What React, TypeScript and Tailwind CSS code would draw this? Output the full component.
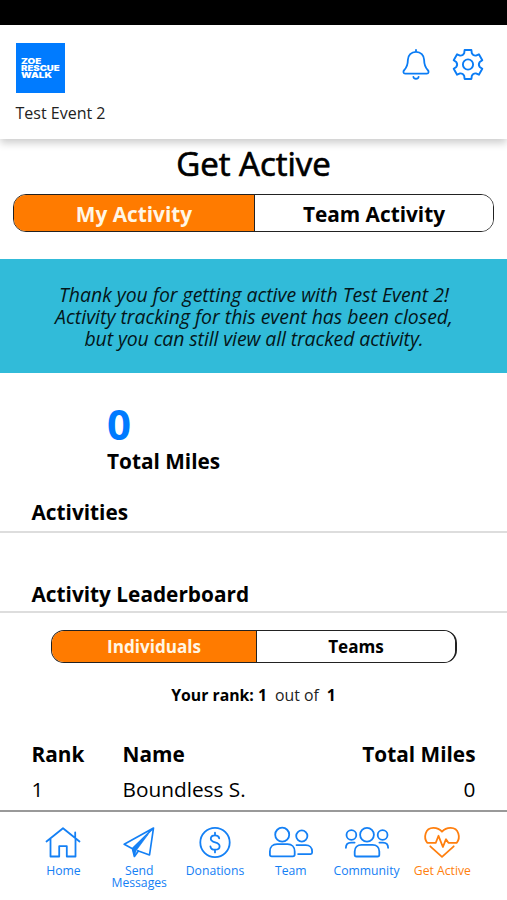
import React, { useState } from 'react';
import clsx from 'clsx';

interface IconProps {
  className?: string;
}

interface NavItem {
  label: string[];
  icon: React.FC<IconProps>;
}

interface LeaderboardRow {
  rank: number;
  name: string;
  miles: number;
}

const BellIcon: React.FC<IconProps> = ({ className }) => (
  <svg className={className} viewBox="0 0 28 33" fill="none" stroke="currentColor" strokeWidth={1.8} strokeLinecap="round" strokeLinejoin="round">
    <path d="M14 1.8v2M14 3.8c-4.8 0-8 3.4-8.1 8-.1 5.2-.6 7.2-3.6 10.2-1.5 1.5-1 3.6.9 3.6h21.6c1.9 0 2.4-2.1.9-3.6-3-3-3.5-5-3.6-10.2-.1-4.6-3.3-8-8.1-8z" />
    <path d="M11.4 28.8c.5 2.6 4.7 2.6 5.2 0" />
  </svg>
);

const GearIcon: React.FC<IconProps> = ({ className }) => (
  <svg className={className} viewBox="-16 -16 32 32" fill="none" stroke="currentColor" strokeWidth={1.9} strokeLinejoin="round">
    <circle r="5.1" />
    <path d="M-3.4-14.5H3.4L3.8-11.3Q5-8.7 7.9-8.9L10.9-10.2 14.3-4.3 11.7-2.4Q10 0 11.7 2.4L14.3 4.3 10.9 10.2 7.9 8.9Q5 8.7 3.8 11.3L3.4 14.5H-3.4L-3.8 11.3Q-5 8.7-7.9 8.9L-10.9 10.2-14.3 4.3-11.7 2.4Q-10 0-11.7-2.4L-14.3-4.3-10.9-10.2-7.9-8.9Q-5-8.7-3.8-11.3Z" />
  </svg>
);

const HomeIcon: React.FC<IconProps> = ({ className }) => (
  <svg className={className} viewBox="0 0 44 34" fill="none" stroke="currentColor" strokeWidth={1.8} strokeLinecap="round" strokeLinejoin="round">
    <path d="M5.500 15.500L22 2.200l16.500 13.300M34.200 11.500V6.500M9.500 13v17.500h8.700V20.200h7.600v10.300h8.700V13" />
  </svg>
);

const SendIcon: React.FC<IconProps> = ({ className }) => (
  <svg className={className} viewBox="0 0 44 34" fill="none" stroke="currentColor" strokeWidth={1.7} strokeLinecap="round" strokeLinejoin="round">
    <path d="M36.500 2L7.200 18.300l8.300 4.400zM36.500 2l-4 27-11.700-4.300M15.500 22.700l1.900 7.800 4-5.600" />
    <path d="M31 8.500L15.500 22.700l2 7.500 1.800-5.600z" fill="currentColor" strokeWidth={0.6} />
  </svg>
);

const DonationIcon: React.FC<IconProps> = ({ className }) => (
  <svg className={className} viewBox="0 0 44 34" fill="none" stroke="currentColor" strokeWidth={1.8} strokeLinecap="round">
    <circle cx="22" cy="16.500" r="14.700" />
    <path d="M26.200 12.400c-.3-2-1.900-3-4.200-3-2.500 0-4.200 1.300-4.200 3.400 0 4.700 8.800 2.500 8.800 7.400 0 2.200-1.800 3.500-4.500 3.500s-4.400-1.200-4.700-3.400M22 6.700v2.700M22 23.700v2.700" />
  </svg>
);

const TeamIcon: React.FC<IconProps> = ({ className }) => (
  <svg className={className} viewBox="0 0 44 34" fill="none" stroke="currentColor" strokeWidth={1.8} strokeLinecap="round" strokeLinejoin="round">
    <circle cx="13.200" cy="8.700" r="7" />
    <path d="M.9 28.500v-3c0-4.500 3-7.300 7.200-7.300h10.400c4.200 0 7.200 2.800 7.200 7.300v3c0 1-.8 1.900-1.900 1.900H2.800c-1.100 0-1.900-.9-1.900-1.900z" />
    <circle cx="32.800" cy="10" r="5.600" />
    <path d="M27.500 19.100h9.200c3.800 0 6.400 2.500 6.400 6.300v1.200c0 .9-.6 1.500-1.500 1.500H29.100" />
  </svg>
);

const CommunityIcon: React.FC<IconProps> = ({ className }) => (
  <svg className={className} viewBox="0 0 44 34" fill="none" stroke="currentColor" strokeWidth={1.8} strokeLinecap="round" strokeLinejoin="round">
    <circle cx="22" cy="8.800" r="6.900" />
    <circle cx="6.400" cy="9" r="4.900" />
    <circle cx="37.600" cy="9" r="4.900" />
    <path d="M9.700 28.700v-3.200c0-4 2.800-6.700 6.800-6.700h11c4 0 6.800 2.700 6.800 6.700v3.200c0 1-.7 1.800-1.800 1.800h-21c-1.100 0-1.800-.8-1.800-1.800z" />
    <path d="M.9 21.800c0-3.400 2.100-5.200 5.200-5.200h3.500M43.100 21.800c0-3.400-2.100-5.200-5.200-5.200h-3.500" />
  </svg>
);

const HeartIcon: React.FC<IconProps> = ({ className }) => (
  <svg className={className} viewBox="0 0 44 34" fill="none" stroke="currentColor" strokeWidth={1.8} strokeLinecap="round" strokeLinejoin="round">
    <path d="M10.300 20.300L22 30.800l11.700-10.500" />
    <path d="M15.800 16.800H7.200C3.300 11.500 5 2 13.300 1.900 17.500 1.800 20.500 4 22 5.700 23.500 4 26.500 1.800 30.700 1.900 39 2 40.700 11.500 36.800 16.800h-8.400L26 13.200 22.900 21 18.500 9.800 15.800 16.800" />
  </svg>
);

const navItems: NavItem[] = [
  { label: ['Home'], icon: HomeIcon },
  { label: ['Send', 'Messages'], icon: SendIcon },
  { label: ['Donations'], icon: DonationIcon },
  { label: ['Team'], icon: TeamIcon },
  { label: ['Community'], icon: CommunityIcon },
  { label: ['Get Active'], icon: HeartIcon },
];

const rows: LeaderboardRow[] = [{ rank: 1, name: 'Boundless S.', miles: 0 }];

export default function App() {
  const [activityTab, setActivityTab] = useState('My Activity');
  const [boardTab, setBoardTab] = useState('Individuals');
  const [page, setPage] = useState('Get Active');

  return (
    <div className="flex h-[900px] w-[507px] flex-col overflow-hidden bg-white font-['Open_Sans',sans-serif] text-black">
      {/* Status bar */}
      <div className="h-[25px] shrink-0 bg-black" />

      {/* Header */}
      <header className="flex h-[114px] shrink-0 justify-between pl-[15.5px] pr-[23.5px] pt-[18px] shadow-[0_4px_8px_rgba(0,0,0,0.2)]">
        <div>
          <div className="flex h-[50px] w-[49px] flex-col justify-center bg-[#007bff] pl-[5px] font-['Inter',sans-serif] text-[8px] font-black leading-[7px] text-white">
            <span className="origin-left scale-x-[1.24]">ZOE</span>
            <span className="origin-left scale-x-[1.2]">RESCUE</span>
            <span className="origin-left scale-x-[1.24]">WALK</span>
          </div>
          <p className="mt-[8px] text-[16px] leading-[24px] text-[#222]">Test Event 2</p>
        </div>
        <div className="flex gap-[22px] pt-[5px] text-[#0a7cf5]">
          <BellIcon className="h-[33px] w-[28px]" />
          <GearIcon className="h-[33px] w-[32px]" />
        </div>
      </header>

      {/* Activity page */}
      <main className="flex h-[671px] shrink-0 flex-col overflow-hidden">
        <h1 className="mt-[3px] h-[44px] shrink-0 text-center text-[33px] leading-[44px] [-webkit-text-stroke:0.7px_black]">Get Active</h1>

        <div className="mx-[13px] mt-[8px] flex h-[38px] shrink-0 overflow-hidden rounded-[13px] border border-[#222]">
          {['My Activity', 'Team Activity'].map((tab) => (
            <button
              key={tab}
              onClick={() => setActivityTab(tab)}
              className={clsx(
                'pt-[2px] text-[20.8px] font-bold leading-[28px] first:w-[241px] first:border-r first:border-[#222] last:flex-1',
                activityTab === tab ? 'bg-[#ff7b00] text-[#fff6e5]' : 'bg-white text-black'
              )}
            >
              {tab}
            </button>
          ))}
        </div>

        <div className="mt-[27px] flex h-[114px] shrink-0 items-center justify-center bg-[#31bbd9] pl-px pt-[2px] text-center text-[19.45px] italic leading-[22px] text-[#04161a]">
          <p>
            Thank you for getting active with Test Event 2!
            <br />
            Activity tracking for this event has been closed,
            <br />
            <span className="tracking-[-0.1px]">but you can still view all tracked activity.</span>
          </p>
        </div>

        <div className="mt-[26px] pl-[107px]">
          <p className="text-[42px] font-bold leading-[50px] text-[#007bff]">0</p>
          <p className="text-[20.8px] font-bold leading-[24px]">Total Miles</p>
        </div>

        <h2 className="mt-[25px] h-[35px] shrink-0 border-b-2 border-[#ddd] pl-[31.5px] text-[20.8px] font-bold leading-[28px]">Activities</h2>
        <h2 className="mt-[47px] h-[33px] shrink-0 border-b-2 border-[#ddd] pl-[31.5px] text-[20.8px] font-bold leading-[28px]">Activity Leaderboard</h2>

        <div className="ml-[51px] mt-[17px] flex h-[33px] w-[406px] shrink-0 overflow-hidden rounded-[13px] border border-r-2 border-[#222]">
          {['Individuals', 'Teams'].map((tab) => (
            <button
              key={tab}
              onClick={() => setBoardTab(tab)}
              className={clsx(
                'text-[17.1px] font-bold first:w-[205px] first:border-r first:border-[#222] last:flex-1',
                boardTab === tab ? 'bg-[#ff7b00] text-[#fff6e5]' : 'bg-white text-black'
              )}
            >
              {tab}
            </button>
          ))}
        </div>

        <p className="mt-[20px] flex h-[24px] shrink-0 justify-center text-[15.8px] leading-[24px]">
          <b>Your rank: 1</b>
          <span className="mx-[8px] text-[#222]">out of</span>
          <b>1</b>
        </p>

        {/* Leaderboard */}
        <div className="mt-[33px] grid grid-cols-[91px_1fr_auto] gap-y-[7px] px-[31.5px] text-[20.8px] leading-[28px]">
          <b>Rank</b>
          <b>Name</b>
          <b>Total Miles</b>
          {rows.map((row) => (
            <React.Fragment key={row.rank}>
              <span>{row.rank}</span>
              <span>{row.name}</span>
              <span className="text-right">{row.miles}</span>
            </React.Fragment>
          ))}
        </div>
      </main>

      {/* Bottom navigation */}
      <nav className="flex h-[90px] shrink-0 border-t-2 border-[#999] bg-white px-[25.5px] pt-[14px]">
        {navItems.map(({ label, icon: Icon }) => {
          const name = label.join(' ');
          return (
            <button
              key={name}
              onClick={() => setPage(name)}
              className={clsx(
                'flex w-[75.8px] shrink-0 flex-col items-center text-[12.2px] leading-[12px]',
                page === name ? 'text-[#ff7f0e]' : 'text-[#1480f5]'
              )}
            >
              <Icon className="mb-[5px] h-[34px] w-[44px]" />
              {label.map((line) => (
                <span key={line}>{line}</span>
              ))}
            </button>
          );
        })}
      </nav>
    </div>
  );
}
